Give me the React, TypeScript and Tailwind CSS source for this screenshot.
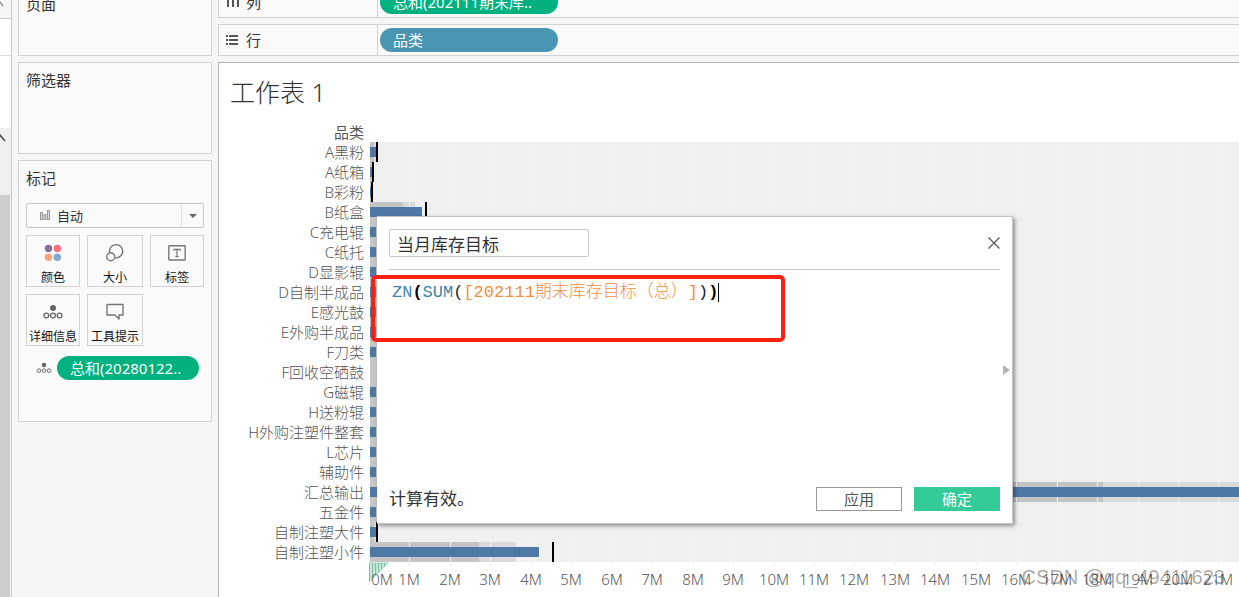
import React, { useState } from "react";

type Mark = {
  label: string;
  value: number;
  bands: [number, number];
  target?: number;
};

const SCALE = 40.45;
const ROW = 20;

// value, bands and target are in pixels from the zero line
const marks: Mark[] = [
  { label: "A黑粉", value: 7, bands: [4, 6], target: 7 },
  { label: "A纸箱", value: 3, bands: [2, 3], target: 3 },
  { label: "B彩粉", value: 2, bands: [1, 2], target: 2 },
  { label: "B纸盒", value: 53, bands: [33, 45], target: 56 },
  { label: "C充电辊", value: 7, bands: [8, 8] },
  { label: "C纸托", value: 7, bands: [8, 8] },
  { label: "D显影辊", value: 7, bands: [8, 8] },
  { label: "D自制半成品", value: 7, bands: [8, 8] },
  { label: "E感光鼓", value: 7, bands: [8, 8] },
  { label: "E外购半成品", value: 7, bands: [8, 8] },
  { label: "F刀类", value: 7, bands: [8, 8] },
  { label: "F回收空硒鼓", value: 0, bands: [8, 8] },
  { label: "G磁辊", value: 7, bands: [8, 8] },
  { label: "H送粉辊", value: 7, bands: [8, 8] },
  { label: "H外购注塑件整套", value: 7, bands: [8, 8] },
  { label: "L芯片", value: 7, bands: [8, 8] },
  { label: "辅助件", value: 7, bands: [8, 8] },
  { label: "汇总输出", value: 960, bands: [733, 980] },
  { label: "五金件", value: 7, bands: [8, 8] },
  { label: "自制注塑大件", value: 7, bands: [4, 6], target: 7 },
  { label: "自制注塑小件", value: 170, bands: [109, 146], target: 183 },
];

const ticks = Array.from({ length: 22 }, (_, i) => i);

const ui = "font-['Noto_Sans','Noto_Sans_CJK_SC',sans-serif]";

const DetailDots = ({ className }: { className: string }) => (
  <svg viewBox="0 0 20 16" className={className} fill="none" stroke="#666" strokeWidth="1.3">
    <circle cx="10" cy="4" r="3" fill="#666" stroke="none" />
    <circle cx="3.4" cy="11.5" r="2.4" />
    <circle cx="10" cy="11.5" r="2.4" />
    <circle cx="16.6" cy="11.5" r="2.4" />
  </svg>
);

const ColorIcon = () => (
  <svg viewBox="0 0 18 18" className="h-[18px] w-[18px]">
    <circle cx="4.5" cy="4.5" r="3.7" fill="#876f98" />
    <circle cx="13.3" cy="4.5" r="3.7" fill="#fa7080" />
    <circle cx="4.5" cy="13.2" r="3.7" fill="#f4a77b" />
    <circle cx="13.3" cy="13.2" r="3.7" fill="#84a5ce" />
  </svg>
);

const SizeIcon = () => (
  <svg viewBox="0 0 20 18" className="h-[18px] w-5" fill="none" stroke="#777" strokeWidth="1.4">
    <path d="M4.7 8.8A6.6 6.6 0 1 1 9.4 13.6" />
    <circle cx="5.7" cy="12.8" r="4" />
  </svg>
);

const LabelIcon = () => (
  <svg viewBox="0 0 18 16" className="h-4 w-[18px]" fill="none" stroke="#777">
    <rect x="0.8" y="0.8" width="16.4" height="14.2" rx="0.6" strokeWidth="1.4" />
    <path d="M6 6V4.4h6V6M9 4.4v7.2M7.3 11.6h3.4" strokeWidth="1.2" />
  </svg>
);

const TooltipIcon = () => (
  <svg viewBox="0 0 18 18" className="h-[18px] w-[18px]" fill="none" stroke="#777" strokeWidth="1.4" strokeLinejoin="round">
    <path d="M1 1.5h16v10.5h-4v4l-4-4H1z" />
  </svg>
);

const markButtons = [
  { label: "颜色", icon: <ColorIcon /> },
  { label: "大小", icon: <SizeIcon /> },
  { label: "标签", icon: <LabelIcon /> },
  { label: "详细信息", icon: <DetailDots className="h-4 w-5" /> },
  { label: "工具提示", icon: <TooltipIcon /> },
];

const DataStrip = () => (
  <aside className="flex w-3 shrink-0 flex-col border-r border-[#c8c8c8]">
    <div className="h-[19px] border-b border-[#c8c8c8]">
      <svg viewBox="0 0 11 18" className="h-[18px] w-[11px]" stroke="#888" strokeWidth="1.3">
        <path d="M0 2l3 4" />
      </svg>
    </div>
    <div className="h-[37px] border-b border-[#dedede] bg-white" />
    <div className="h-[72px] bg-white" />
    <div className="h-[67px] bg-[#efefef]">
      <svg viewBox="0 0 11 20" className="h-5 w-[11px]" stroke="#555" strokeWidth="1.7">
        <path d="M-1 6l6 7" />
      </svg>
    </div>
    <div className="mr-px flex-1 bg-[#cdcdcd]" />
  </aside>
);

const SideCards = () => (
  <div className="flex w-[194px] shrink-0 flex-col gap-[6px] text-[15px] leading-5 text-[#333]">
    <section className="h-14 border border-t-0 border-[#d2d2d2] bg-[#fafafa] px-[7px]">
      <h2 className="-mt-[6px]">页面</h2>
    </section>
    <section className="h-[92px] border border-[#d2d2d2] bg-[#fafafa] px-[7px] pt-[7px]">
      <h2>筛选器</h2>
    </section>
    <section className="h-[262px] border border-[#d2d2d2] bg-[#fafafa] px-[7px] pt-[7px]">
      <h2>标记</h2>
      <div className="relative mt-[15px]">
        <select
          aria-label="标记类型"
          className="block h-[25px] w-full appearance-none rounded-[2px] border border-[#c8c8c8] bg-[#fafafa] pl-[30px] text-[13px] leading-5"
        >
          <option>自动</option>
        </select>
        <svg viewBox="0 0 10 10" className="pointer-events-none absolute top-[7px] left-[14px] h-[10px] w-[10px]" fill="#ddd" stroke="#999">
          <rect x="0.5" y="2.5" width="2" height="7" />
          <rect x="4" y="4.5" width="2" height="5" />
          <rect x="7.5" y="0.5" width="2" height="9" />
        </svg>
        <span className="pointer-events-none absolute inset-y-px right-0 flex w-[23px] items-center justify-center border-l border-[#dedede]">
          <svg viewBox="0 0 8 4" className="h-1 w-2">
            <path d="M0 0h8l-4 4z" fill="#666" />
          </svg>
        </span>
      </div>
      <div className="mt-[7px] grid grid-cols-[54px_56px_54px] gap-[7px]">
        {markButtons.map((b) => (
          <button
            key={b.label}
            className="flex h-[52px] flex-col items-center border border-[#d2d2d2] pt-2 text-[12px] leading-4 whitespace-nowrap text-[#111]"
          >
            <span className="flex h-[18px] items-center">{b.icon}</span>
            <span className="mt-2">{b.label}</span>
          </button>
        ))}
      </div>
      <div className="mt-[10px] flex items-center pl-[10px]">
        <DetailDots className="h-3 w-4" />
        <button className="ml-[5px] h-6 w-[142px] rounded-full bg-[#00b180] pl-[13px] text-left text-[15px] text-white">
          总和(20280122..
        </button>
      </div>
    </section>
  </div>
);

const Shelves = () => (
  <div className="flex flex-col gap-[6px] text-[15px] leading-5 text-[#333]">
    <div className="flex h-[18px] items-end border-b border-l border-[#d2d2d2] bg-[#fafafa]">
      <div className="flex h-full w-[159px] items-end border-r border-[#d2d2d2] pb-[5px] pl-[7px]">
        <svg viewBox="0 0 14 12" className="mb-[5px] h-3 w-[14px]" fill="#555">
          <path d="M1 0h2v2H1zM6 0h2v2H6zM11 0h2v2h-2zM1 4h2v8H1zM6 4h2v8H6zM11 4h2v8h-2z" />
        </svg>
        <span className="ml-[6px]">列</span>
      </div>
      <button className="mb-[3px] ml-[2px] h-6 w-[178px] rounded-full bg-[#00b180] pl-[13px] text-left text-white">
        总和(202111期末库..
      </button>
    </div>
    <div className="flex h-8 items-center border border-r-0 border-[#d2d2d2] bg-[#fafafa]">
      <div className="flex h-full w-[159px] items-center border-r border-[#d2d2d2] pl-[7px]">
        <svg viewBox="0 0 12 11" className="h-[11px] w-3" fill="#555">
          <path d="M0 0h2v2H0zM0 4h2v2H0zM0 8h2v2H0zM3 0h9v2H3zM3 4h9v2H3zM3 8h9v2H3z" />
        </svg>
        <span className="ml-2">行</span>
      </div>
      <button className="ml-[2px] h-6 w-[178px] rounded-full bg-[#4996b2] pl-[13px] text-left text-white">品类</button>
    </div>
  </div>
);

const BulletChart = () => (
  <svg className="h-[455px] min-w-0 flex-1 overflow-hidden" role="img" aria-label="各品类库存">
    <defs>
      <pattern id="hatch" width="3" height="3" patternUnits="userSpaceOnUse">
        <rect width="3" height="3" fill="#c4e8d9" />
        <rect width="1" height="3" fill="#7ebf9f" />
      </pattern>
    </defs>
    <rect x="1" width="100%" height={marks.length * ROW} fill="#f0f0f0" />
    {marks.map((m, i) => (
      <g key={m.label} shapeRendering="crispEdges">
        <rect x="1" y={i * ROW} width={m.bands[1]} height={ROW} fill="#dadada" />
        <rect x="1" y={i * ROW} width={m.bands[0]} height={ROW} fill="#c5c5c5" />
      </g>
    ))}
    {ticks.slice(1).map((t) => (
      <rect key={t} x={Math.round(t * SCALE)} y="0" width="1" height="424" fill="#f1f1f1" />
    ))}
    {marks.map((m, i) => (
      <g key={m.label} shapeRendering="crispEdges">
        <rect x="1" y={i * ROW + 5} width={Math.max(m.value - 1, 0)} height="10" fill="#4e79a7" />
        {m.target && <rect x={m.target} y={i * ROW} width="2" height={ROW} fill="#000" />}
      </g>
    ))}
    <path d="M0 421h19L0 440z" fill="url(#hatch)" />
    <path d="M0 421h19L0 440z" fill="none" stroke="#8cc8ad" strokeWidth="0.8" />
    {ticks.map((t) => (
      <text
        key={t}
        x={t === 0 ? 13 : Math.round(t * SCALE)}
        y="443"
        textAnchor="middle"
        fill="#555"
        className="text-[15px] font-light"
      >
        {t}M
      </text>
    ))}
  </svg>
);

const Worksheet = () => (
  <main className="flex-1 border-t border-l border-[#b0b0b0] bg-white font-light">
    <h1 className="flex h-[57px] items-center pl-[11px] text-[25px] leading-8 text-[#333]">工作表 1</h1>
    <div className="flex items-end">
      <div className="w-[150px] shrink-0 self-start pt-[2px] pr-[5px] text-right text-[15px] leading-5 whitespace-nowrap text-[#555]">
        <div className="font-normal">品类</div>
        <ul>
          {marks.map((m) => (
            <li key={m.label}>{m.label}</li>
          ))}
        </ul>
      </div>
      <div className="flex min-w-0 flex-1 pt-[22px]">
        <BulletChart />
      </div>
    </div>
  </main>
);

const CalcDialog = ({ onClose }: { onClose: () => void }) => {
  const [name, setName] = useState("当月库存目标");

  return (
    <div
      role="dialog"
      aria-label="计算字段"
      className="absolute top-[216px] left-[377px] flex h-[308px] w-[636px] flex-col border border-l-0 border-[#c4c4c4] bg-white px-3 pb-3 text-[17px] text-[#333] shadow-[2px_2px_4px_rgba(0,0,0,0.4)]"
    >
      <header className="flex h-[53px] items-center justify-between border-b border-[#c8c8c8]">
        <input
          aria-label="字段名称"
          value={name}
          onChange={(e) => setName(e.target.value)}
          className="h-7 w-[200px] rounded-[2px] border border-[#c8c8c8] px-[7px] leading-6 outline-none"
        />
        <button aria-label="关闭" onClick={onClose}>
          <svg viewBox="0 0 12 12" className="h-3 w-3" stroke="#555" strokeWidth="1.2">
            <path d="M0.5 0.5l11 11M11.5 0.5l-11 11" />
          </svg>
        </button>
      </header>
      <div
        role="textbox"
        aria-label="公式"
        contentEditable
        suppressContentEditableWarning
        spellCheck={false}
        className="flex-1 pt-[11px] pl-[3px] font-['Liberation_Mono','Noto_Sans_CJK_SC',monospace] font-light leading-6 whitespace-nowrap text-[#222] outline-none [text-spacing-trim:space-all]"
      >
        <span className="text-[#4086a8]">ZN</span>
        <span className="font-bold text-black">(</span>
        <span className="text-[#4086a8]">SUM</span>(
        <span className="text-[#f28e3c]">[202111期末库存目标（总）]</span>)
        <span className="border-r border-black font-bold text-black">)</span>
      </div>
      <footer className="flex items-center gap-3 text-[15px]">
        <p className="mr-auto text-[17px] leading-6">计算有效。</p>
        <button className="h-6 w-[86px] border border-[#999] text-[#555]">应用</button>
        <button className="h-6 w-[86px] bg-[#33cc99] text-white">确定</button>
      </footer>
      <svg viewBox="0 0 7 10" className="absolute top-[148px] right-[2px] h-[10px] w-[7px]">
        <path d="M0 0l7 5-7 5z" fill="#b4b4b4" />
      </svg>
    </div>
  );
};

const App: React.FC = () => {
  const [open, setOpen] = useState(true);

  return (
    <div className={`relative flex min-h-screen overflow-hidden bg-[#f5f5f5] ${ui}`}>
      <DataStrip />
      <div className="flex min-w-0 flex-1 gap-[6px] pl-[6px]">
        <SideCards />
        <div className="flex min-w-0 flex-1 flex-col gap-[6px]">
          <Shelves />
          <Worksheet />
        </div>
      </div>
      {open && <CalcDialog onClose={() => setOpen(false)} />}
      {/* Highlight around the formula */}
      <div className="pointer-events-none absolute top-[275px] left-[371px] h-[67px] w-[414px] rounded-[5px] border-4 border-[#fb2010]" />
      <div className="pointer-events-none absolute right-[14px] bottom-2 font-['Liberation_Sans',sans-serif] text-[20px] leading-6 text-black/35">
        CSDN @qq_49411623
      </div>
    </div>
  );
};

export default App;
